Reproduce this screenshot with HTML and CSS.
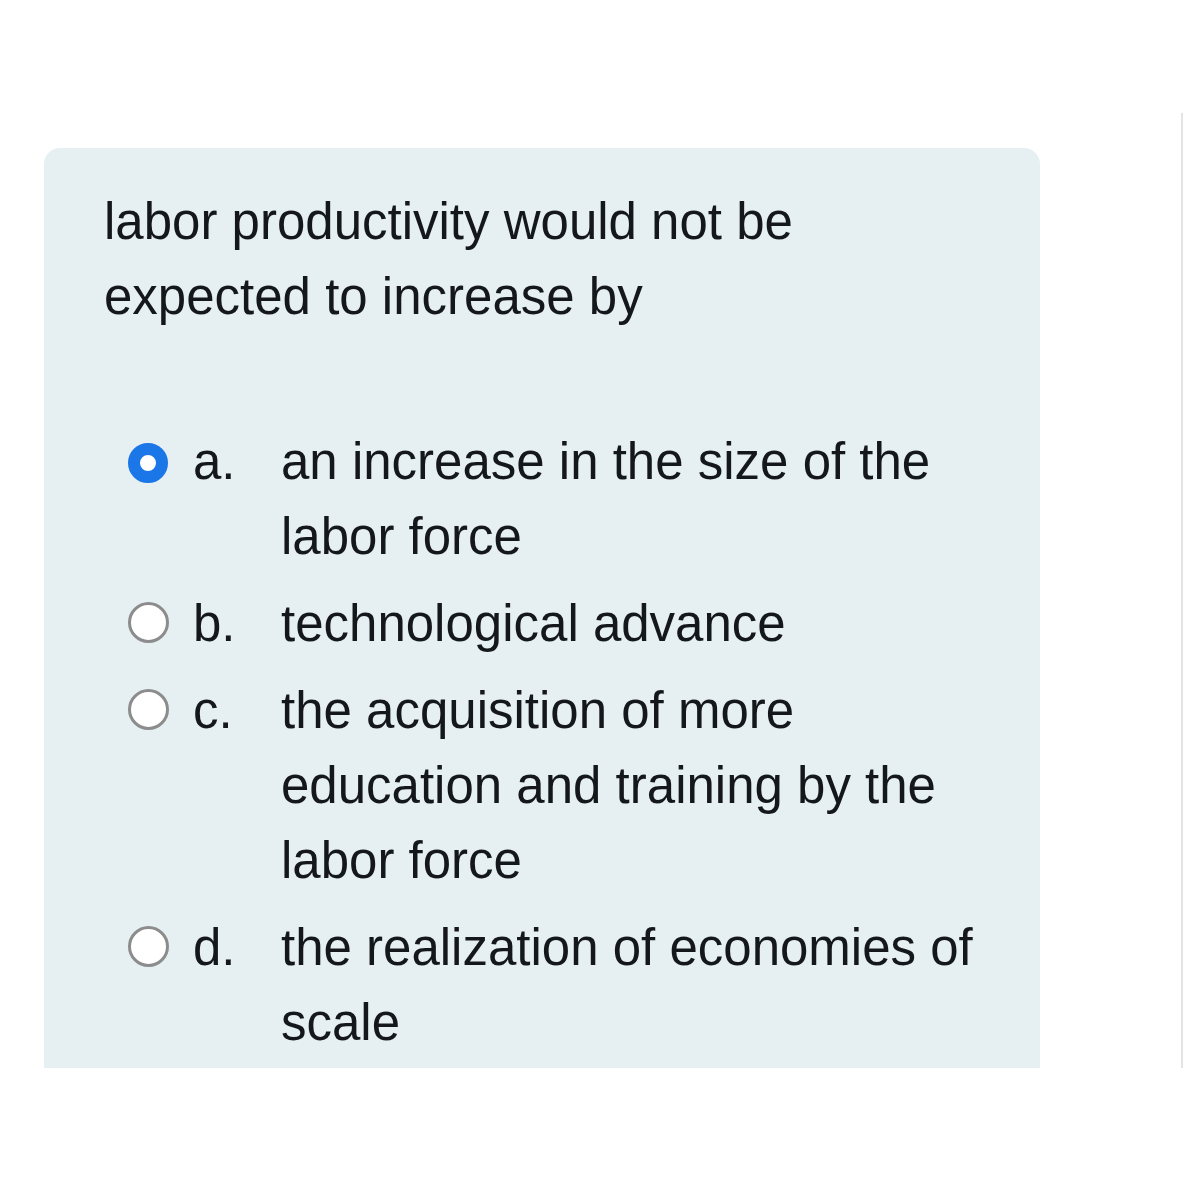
FILE: index.html
```html
<!DOCTYPE html>
<html lang="en">
<head>
<meta charset="utf-8">
<title>Question</title>
<link rel="stylesheet" href="styles.css">
</head>
<body>
<div class="page">
  <div class="card">
    <div class="question">labor productivity would not be expected to increase by</div>
    <div class="answers">
      <div class="option">
        <span class="radio checked"></span>
        <span class="label">a.</span>
        <span class="text">an increase in the size of the labor force</span>
      </div>
      <div class="option">
        <span class="radio"></span>
        <span class="label">b.</span>
        <span class="text">technological advance</span>
      </div>
      <div class="option">
        <span class="radio"></span>
        <span class="label">c.</span>
        <span class="text">the acquisition of more education and training by the labor force</span>
      </div>
      <div class="option">
        <span class="radio"></span>
        <span class="label">d.</span>
        <span class="text">the realization of economies of scale</span>
      </div>
    </div>
  </div>
  <div class="edge"></div>
</div>
</body>
</html>
```

FILE: styles.css
```css
html, body {
  margin: 0;
  padding: 0;
  background: #ffffff;
}

body {
  width: 1184px;
  height: 1184px;
  overflow: hidden;
  font-family: "Liberation Sans", Arial, sans-serif;
  color: #15181b;
}

.page {
  display: flex;
  align-items: flex-start;
  padding: 113px 0 0 44px;
}

.card {
  box-sizing: border-box;
  width: 996px;
  height: 920px;
  margin-top: 35px;
  padding: 36px 38px 0 60px;
  background: #e6f0f3;
  border-radius: 16px 16px 0 0;
  font-size: 51px;
  line-height: 75px;
}

.question {
  margin-bottom: 90px;
}

.answers {
  display: flex;
  flex-direction: column;
  gap: 12px;
}

.option {
  display: grid;
  grid-template-columns: 65px 88px 1fr;
  padding-left: 24px;
}

.radio {
  box-sizing: border-box;
  width: 41px;
  height: 41px;
  margin-top: 16px;
  border-radius: 50%;
  background: #ffffff;
  border: 3px solid #8c8c8c;
}

.radio.checked {
  width: 40px;
  height: 40px;
  margin-top: 19px;
  border: 12px solid #1b76e8;
}

.edge {
  width: 2px;
  height: 955px;
  margin-left: auto;
  margin-right: 1px;
  background: #e4e4e4;
}
```
